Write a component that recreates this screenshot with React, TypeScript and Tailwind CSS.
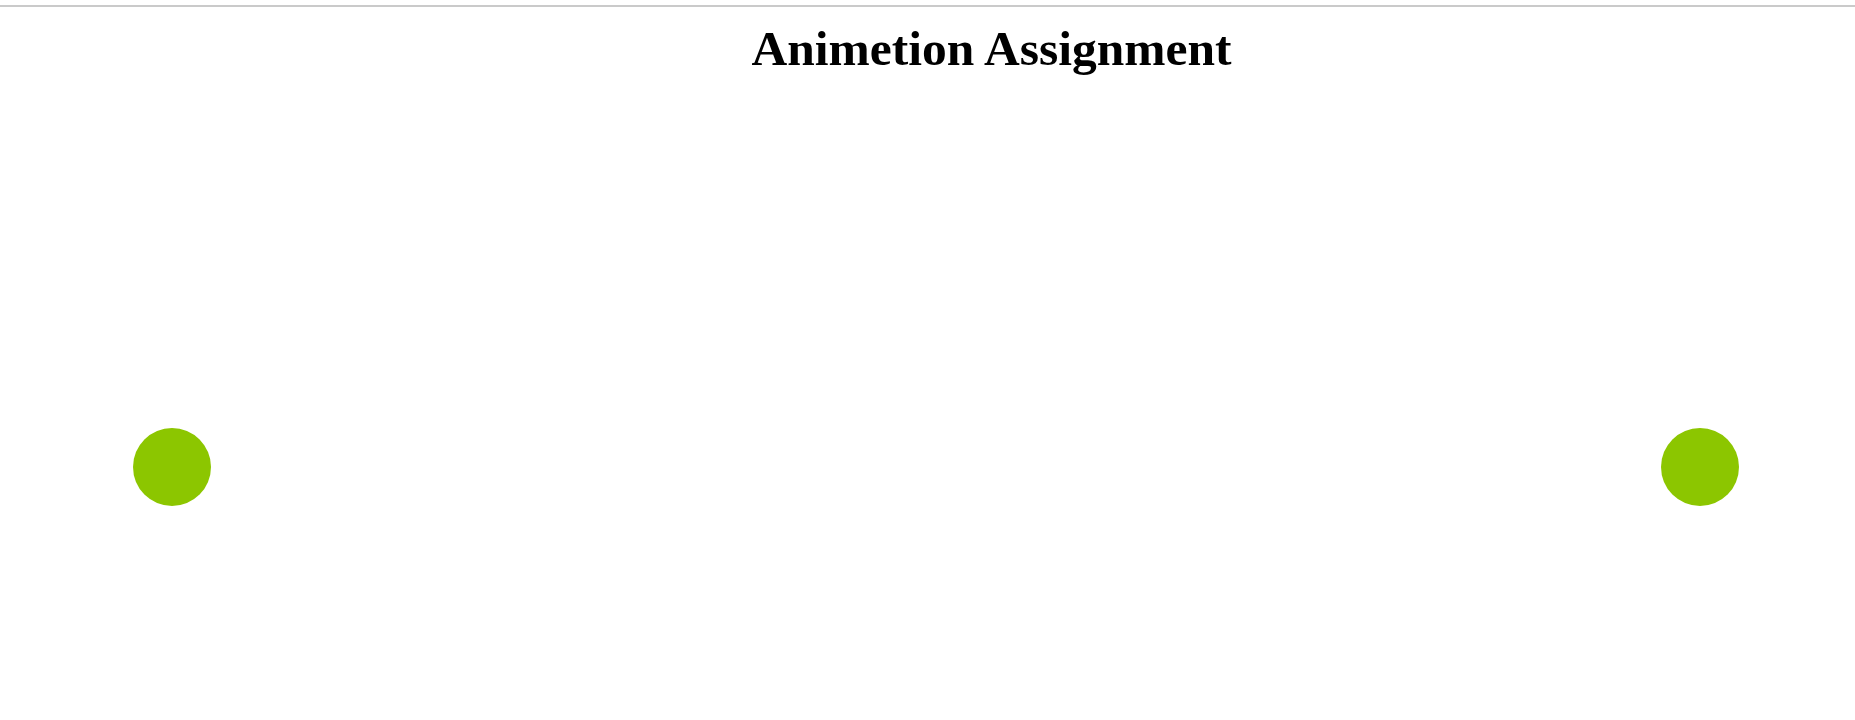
export default function App() {
  return (
    <div className="relative w-full h-[720px] bg-white overflow-hidden" style={{ fontFamily: '"Liberation Serif", "Times New Roman", serif' }}>
      <div className="pt-[5px]">
        <div className="h-[2px] bg-[#cacaca]" />
      </div>
      <h1 className="mt-[5px] pl-[128px] text-center text-[49.5px] font-bold text-black leading-normal">
        Animetion Assignment
      </h1>
      <div className="absolute left-[133px] top-[428px] w-[78px] h-[78px] rounded-full bg-[#8cc600]" />
      <div className="absolute left-[1661px] top-[428px] w-[78px] h-[78px] rounded-full bg-[#8cc600]" />
    </div>
  );
}
